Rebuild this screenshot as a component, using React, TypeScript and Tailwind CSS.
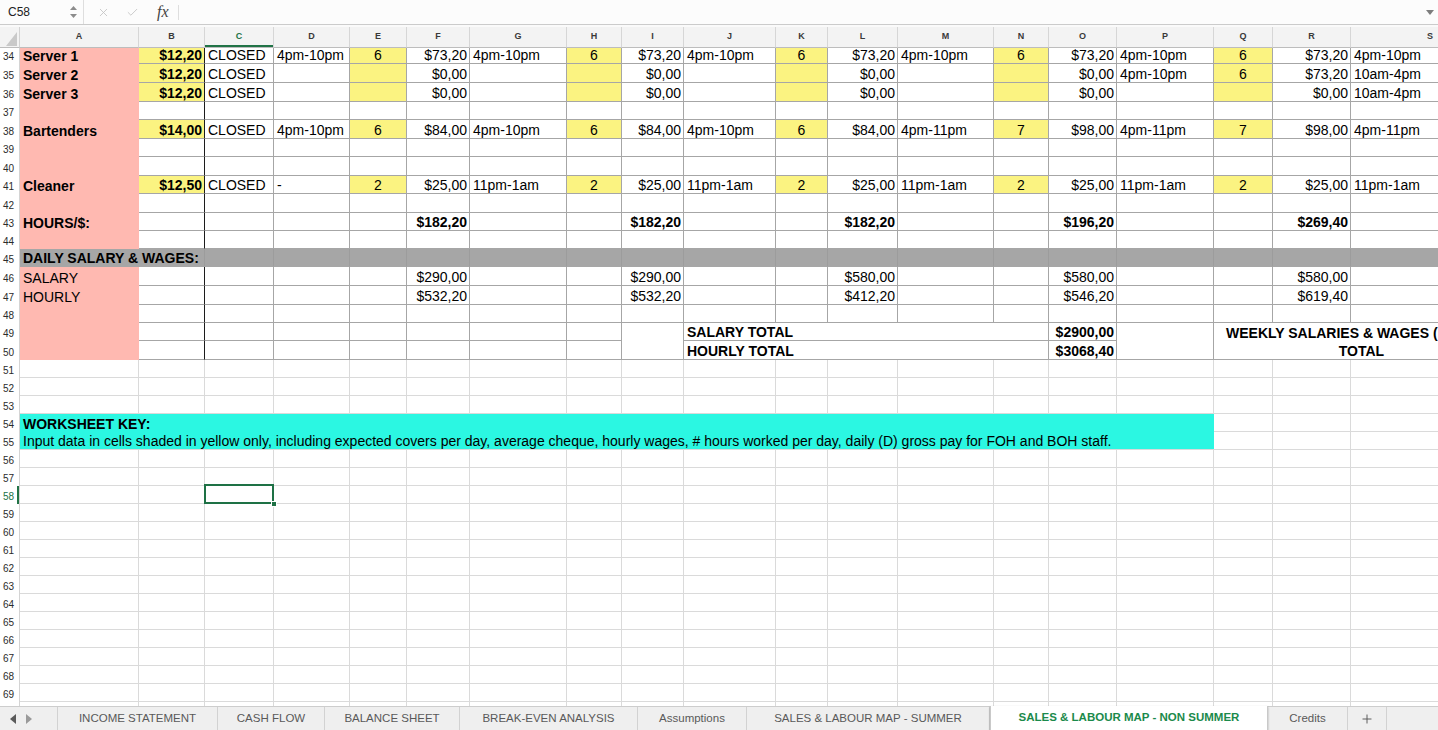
import { Check, Plus, X } from 'lucide-react';
import clsx from 'clsx';

type Cell = {
  t?: string;
  b?: boolean;
  al?: 'l' | 'r' | 'c';
  bg?: 'pink' | 'yellow' | 'grey' | 'cyan';
  span?: 2 | 3 | 5 | 16;
  nb?: boolean; // no bottom line
  nr?: boolean; // no right line
  thick?: boolean; // dark right border (B | C)
  sel?: boolean;
  pad?: string;
};

type Row = { n: number; h: number; cells: Cell[] };

const GRID =
  'grid grid-cols-[20px_119px_66px_69px_76px_57px_63px_97px_55px_62px_92px_52px_70px_96px_55px_68px_97px_59px_78px_159px]';

const COLS = ['A', 'B', 'C', 'D', 'E', 'F', 'G', 'H', 'I', 'J', 'K', 'L', 'M', 'N', 'O', 'P', 'Q', 'R', 'S'];

const HEIGHT: Record<number, string> = {
  4: 'h-[4px]',
  16: 'h-[16px]',
  18: 'h-[18px]',
  19: 'h-[19px]',
};

const BG = {
  pink: 'bg-[#ffb9b1]',
  yellow: 'bg-[#fbf381]',
  grey: 'bg-[#a6a6a6]',
  cyan: 'bg-[#2bf7e2]',
};

const SPAN = { 2: 'col-span-2', 3: 'col-span-3', 5: 'col-span-5', 16: 'col-span-16' };

const E: Cell = {};
const pk = (t = '', b = true): Cell => ({ t, b, bg: 'pink', nb: true, nr: true });
const rate = (t: string): Cell => ({ t, b: true, al: 'r', bg: 'yellow', thick: true });
const B0: Cell = { thick: true };
const tx = (t: string): Cell => ({ t });
const hr = (t = ''): Cell => ({ t, al: 'c', bg: 'yellow' });
const amt = (t: string, b = false): Cell => ({ t, al: 'r', b });
const blanks = (n: number): Cell[] => Array.from({ length: n }, () => E);

/** time | hours | pay */
function day(time: string, h: string, pay: string): Cell[] {
  return [time ? tx(time) : E, hr(h), amt(pay)];
}

const blankLabour = (): Cell[] => [pk(''), B0, ...blanks(17)];

const LABOUR: Row[] = [
  {
    n: 34,
    h: 16,
    cells: [
      pk('Server 1'), rate('$12,20'), tx('CLOSED'),
      ...day('4pm-10pm', '6', '$73,20'), ...day('4pm-10pm', '6', '$73,20'), ...day('4pm-10pm', '6', '$73,20'),
      ...day('4pm-10pm', '6', '$73,20'), ...day('4pm-10pm', '6', '$73,20'), tx('4pm-10pm'),
    ],
  },
  {
    n: 35,
    h: 19,
    cells: [
      pk('Server 2'), rate('$12,20'), tx('CLOSED'),
      ...day('', '', '$0,00'), ...day('', '', '$0,00'), ...day('', '', '$0,00'),
      ...day('', '', '$0,00'), ...day('4pm-10pm', '6', '$73,20'), tx('10am-4pm'),
    ],
  },
  {
    n: 36,
    h: 19,
    cells: [
      pk('Server 3'), rate('$12,20'), tx('CLOSED'),
      ...day('', '', '$0,00'), ...day('', '', '$0,00'), ...day('', '', '$0,00'),
      ...day('', '', '$0,00'), ...day('', '', '$0,00'), tx('10am-4pm'),
    ],
  },
  { n: 37, h: 18, cells: blankLabour() },
  {
    n: 38,
    h: 19,
    cells: [
      pk('Bartenders'), rate('$14,00'), tx('CLOSED'),
      ...day('4pm-10pm', '6', '$84,00'), ...day('4pm-10pm', '6', '$84,00'), ...day('4pm-10pm', '6', '$84,00'),
      ...day('4pm-11pm', '7', '$98,00'), ...day('4pm-11pm', '7', '$98,00'), tx('4pm-11pm'),
    ],
  },
  { n: 39, h: 18, cells: blankLabour() },
  { n: 40, h: 19, cells: blankLabour() },
  {
    n: 41,
    h: 18,
    cells: [
      pk('Cleaner'), rate('$12,50'), tx('CLOSED'),
      ...day('-', '2', '$25,00'), ...day('11pm-1am', '2', '$25,00'), ...day('11pm-1am', '2', '$25,00'),
      ...day('11pm-1am', '2', '$25,00'), ...day('11pm-1am', '2', '$25,00'), tx('11pm-1am'),
    ],
  },
  { n: 42, h: 19, cells: blankLabour() },
  {
    n: 43,
    h: 18,
    cells: [
      pk('HOURS/$:'), B0, E, E, E, amt('$182,20', true), E, E, amt('$182,20', true), E, E,
      amt('$182,20', true), E, E, amt('$196,20', true), E, E, amt('$269,40', true), E,
    ],
  },
  { n: 44, h: 18, cells: blankLabour() },
  {
    n: 45,
    h: 18,
    cells: [
      { t: 'DAILY SALARY & WAGES:', b: true, bg: 'grey', span: 2 },
      ...Array.from({ length: 17 }, (): Cell => ({ bg: 'grey' })),
    ],
  },
  {
    n: 46,
    h: 19,
    cells: [
      pk('SALARY', false), B0, E, E, E, amt('$290,00'), E, E, amt('$290,00'), E, E,
      amt('$580,00'), E, E, amt('$580,00'), E, E, amt('$580,00'), E,
    ],
  },
  {
    n: 47,
    h: 19,
    cells: [
      pk('HOURLY', false), B0, E, E, E, amt('$532,20'), E, E, amt('$532,20'), E, E,
      amt('$412,20'), E, E, amt('$546,20'), E, E, amt('$619,40'), E,
    ],
  },
  { n: 48, h: 18, cells: blankLabour() },
  {
    n: 49,
    h: 18,
    cells: [
      pk(''), B0, E, E, E, E, E, E, { nb: true },
      { t: 'SALARY TOTAL', b: true, span: 5 },
      amt('$2900,00', true),
      { nb: true },
      { t: 'WEEKLY SALARIES & WAGES (', b: true, span: 3, nb: true, pad: 'pl-[12px]' },
    ],
  },
  {
    n: 50,
    h: 19,
    cells: [
      pk(''), B0, E, E, E, E, E, E, E,
      { t: 'HOURLY TOTAL', b: true, span: 5 },
      amt('$3068,40', true),
      E,
      { t: 'TOTAL', b: true, al: 'c', span: 3 },
    ],
  },
];

const KEY_TEXT =
  'Input data in cells shaded in yellow only, including expected covers per day, average cheque, hourly wages, # hours worked per day, daily (D) gross pay for FOH and BOH staff.';

const LOWER: Row[] = Array.from({ length: 19 }, (_, i) => {
  const n = 51 + i;
  let cells = blanks(19);
  if (n === 54) cells = [{ t: 'WORKSHEET KEY:', b: true, bg: 'cyan', span: 16, nb: true, nr: true }, E, E, E];
  if (n === 55) cells = [{ t: KEY_TEXT, bg: 'cyan', span: 16, nr: true }, E, E, E];
  if (n === 58) cells = [E, E, { sel: true }, ...blanks(16)];
  return { n, h: 18, cells };
});

const ROWS = [...LABOUR, ...LOWER];

const TABS = [
  { label: 'INCOME STATEMENT', w: 'w-[160px]' },
  { label: 'CASH FLOW', w: 'w-[107px]' },
  { label: 'BALANCE SHEET', w: 'w-[135px]' },
  { label: 'BREAK-EVEN ANALYSIS', w: 'w-[178px]' },
  { label: 'Assumptions', w: 'w-[109px]' },
  { label: 'SALES & LABOUR MAP - SUMMER', w: 'w-[243px]' },
  { label: 'SALES & LABOUR MAP - NON SUMMER', w: 'w-[278px]', active: true },
  { label: 'Credits', w: 'w-[80px]' },
];

export default function App() {
  return (
    <div className="flex h-[730px] w-[1438px] flex-col overflow-hidden bg-white font-['Liberation_Sans',Arial,sans-serif] text-black">
      <FormulaBar />
      <ColumnHeaders />
      {ROWS.map((r) => (
        <SheetRow key={r.n} row={r} />
      ))}
      {/* peek of row 70 */}
      <div className={clsx(GRID, 'h-[4px] shrink-0')}>
        <div className="border-r border-r-[#d4d4d4]" />
        {COLS.map((c) => (
          <div key={c} className="border-r border-r-[#dadada]" />
        ))}
      </div>
      <SheetTabs />
    </div>
  );
}

function FormulaBar() {
  return (
    <div className="flex h-[25px] shrink-0 items-center border-b border-b-[#cbcbcb] bg-[#fcfcfc]">
      <div className="flex h-full w-[84px] items-center justify-between border-r border-r-[#dedede] pl-[8px] pr-[6px]">
        <span className="text-[12px] text-[#222]">C58</span>
        <span className="flex flex-col gap-[4px]">
          <svg width="7" height="4" viewBox="0 0 7 4">
            <path d="M0 4 L3.5 0 L7 4Z" fill="#8c8c8c" />
          </svg>
          <svg width="7" height="4" viewBox="0 0 7 4">
            <path d="M0 0 L3.5 4 L7 0Z" fill="#8c8c8c" />
          </svg>
        </span>
      </div>
      <X className="ml-[13px] h-[13px] w-[13px] text-[#c4c4c4]" strokeWidth={1.6} />
      <Check className="ml-[16px] h-[13px] w-[13px] text-[#c4c4c4]" strokeWidth={1.6} />
      <span className="ml-[18px] font-['Liberation_Serif',serif] text-[16px] italic leading-none text-[#444]">fx</span>
      <div className="ml-[9px] h-[15px] border-l border-l-[#dedede]" />
      <div className="flex-1" />
      <svg className="mr-[4px]" width="8" height="5" viewBox="0 0 8 5">
        <path d="M0 0 L4 5 L8 0Z" fill="#7d7d7d" />
      </svg>
    </div>
  );
}

function ColumnHeaders() {
  return (
    <div className={clsx(GRID, 'h-[23px] shrink-0 border-t-2 border-t-[#fafafa] bg-[#f3f3f3]')}>
      <div className="relative border-r border-b border-r-[#d3d3d3] border-b-[#bdbdbd]">
        <svg className="absolute right-[2px] bottom-[1px]" width="11" height="14" viewBox="0 0 11 14">
          <path d="M0 14 L11 14 L11 0Z" fill="#c9c9c9" />
        </svg>
      </div>
      {COLS.map((c) => (
        <div
          key={c}
          className={clsx(
            'flex items-center justify-center border-r border-b border-r-[#d6d6d6] border-b-[#bdbdbd] text-[9px] font-bold',
            c === 'C' ? 'text-[#217346] shadow-[inset_0_-2px_0_#217346]' : 'text-[#3a3a3a]',
          )}
        >
          {c}
        </div>
      ))}
    </div>
  );
}

function SheetRow({ row }: { row: Row }) {
  const selected = row.n === 58;
  const light = row.n > 50;
  return (
    <div className={clsx(GRID, 'shrink-0', HEIGHT[row.h])}>
      <div
        className={clsx(
          'flex items-end border-r border-r-[#d4d4d4] pb-[2px] pl-[3px] text-[10px] leading-[11px]',
          selected ? 'text-[#217346] shadow-[inset_-2px_0_0_#217346]' : 'text-[#2b2b2b]',
        )}
      >
        {row.n}
      </div>
      {row.cells.map((c, i) => (
        <SheetCell key={i} c={c} light={light} />
      ))}
    </div>
  );
}

function SheetCell({ c, light }: { c: Cell; light: boolean }) {
  const lineB = c.nb ? '' : light ? 'border-b border-b-[#dadada]' : 'border-b border-b-[#a6a6a6]';
  const lineR = c.nr
    ? ''
    : c.thick
      ? 'border-r border-r-[#1c1c1c]'
      : c.bg === 'grey'
        ? 'border-r border-r-[#9c9c9c]'
        : light
          ? 'border-r border-r-[#dadada]'
          : 'border-r border-r-[#a6a6a6]';

  return (
    <div
      className={clsx(
        'relative flex items-end whitespace-nowrap text-[14px] leading-[16px]',
        c.sel ? 'z-10' : 'overflow-hidden',
        lineB,
        lineR,
        c.bg && BG[c.bg],
        c.span && SPAN[c.span],
        c.b && 'font-bold',
        c.pad ? c.pad : c.al === 'r' ? 'justify-end pr-[2px]' : c.al === 'c' ? 'justify-center' : 'pl-[3px]',
      )}
    >
      {c.t}
      {c.sel && (
        <>
          <div className="absolute -top-[2px] -left-[1px] -right-[1px] -bottom-[1px] border-2 border-[#1e7145]" />
          <div className="absolute -right-[4px] -bottom-[4px] h-[6px] w-[6px] border border-white bg-[#1e7145]" />
        </>
      )}
    </div>
  );
}

function SheetTabs() {
  return (
    <div className="flex h-[24px] shrink-0 border-t border-t-[#cdcdcd] bg-[#efefef] text-[11.5px] text-[#595959]">
      <div className="flex w-[58px] items-center gap-[10px] border-r border-r-[#d2d2d2] pl-[10px]">
        <svg width="6" height="10" viewBox="0 0 6 10">
          <path d="M6 0 L0 5 L6 10Z" fill="#5a5a5a" />
        </svg>
        <svg width="6" height="10" viewBox="0 0 6 10">
          <path d="M0 0 L6 5 L0 10Z" fill="#9a9a9a" />
        </svg>
      </div>
      {TABS.map((tab) =>
        tab.active ? (
          <div
            key={tab.label}
            className={clsx(
              tab.w,
              '-mt-px flex items-center justify-center border-x border-x-[#c9c9c9] bg-white font-bold text-[#1b8a4b] shadow-[0_1px_2px_rgba(0,0,0,0.3)]',
            )}
          >
            {tab.label}
          </div>
        ) : (
          <div
            key={tab.label}
            className={clsx(tab.w, 'flex items-center justify-center whitespace-nowrap border-r border-r-[#d2d2d2]')}
          >
            {tab.label}
          </div>
        ),
      )}
      <div className="flex w-[39px] items-center justify-center border-r border-r-[#d2d2d2]">
        <Plus className="h-[14px] w-[14px] text-[#555]" strokeWidth={1.6} />
      </div>
    </div>
  );
}
